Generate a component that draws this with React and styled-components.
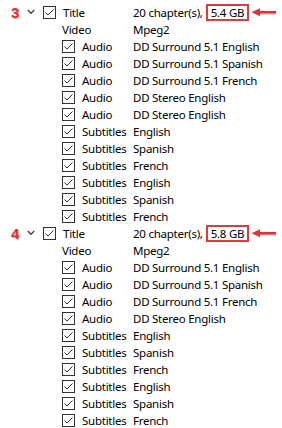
import React from "react";
import styled, { createGlobalStyle } from "styled-components";

const Global = createGlobalStyle`
  html, body { margin: 0; padding: 0; background: #fff; }
  body {
    font-family: "Noto Sans", "Open Sans", sans-serif;
    font-size: 11.5px;
    letter-spacing: -0.25px;
    color: #000;
  }
`;

const Tree = styled.div`
  padding-top: 4px;
  width: 282px;
`;

const Row = styled.div`
  display: grid;
  grid-template-columns: 133px 1fr;
  height: 17px;
  align-items: center;
  line-height: 17px;
  white-space: nowrap;
`;

const Left = styled.div`
  display: flex;
  align-items: center;
  padding-left: ${(p) => p.$indent}px;
`;

const Marker = styled.span`
  width: 27px;
  box-sizing: border-box;
  padding-left: 11px;
  color: #d8343c;
  font-family: "Liberation Sans", Arial, sans-serif;
  font-weight: bold;
  font-size: 15px;
  letter-spacing: 0;
  text-shadow: 1px 1px 1px rgba(120, 0, 0, 0.35);
`;

const Chevron = styled.svg`
  width: 8px;
  height: 6px;
  margin-right: 8px;
  margin-top: -2px;
`;

const Box = styled.svg`
  width: 13px;
  height: 13px;
  margin-right: 7px;
  flex: none;
`;

const Label = styled.span``;

const Value = styled.div`
  display: flex;
  align-items: center;
`;

const SizeBox = styled.span`
  border: 2px solid #dd3b40;
  padding: 0 3px 0 3px;
  margin-left: 3px;
  line-height: 13px;
  height: 13px;
  display: inline-block;
`;

const Arrow = styled.svg`
  width: 26px;
  height: 9px;
  margin-left: 2px;
`;

function Check() {
  return (
    <Box viewBox="0 0 13 13">
      <rect x="0.5" y="0.5" width="12" height="12" fill="#fff" stroke="#333" />
      <path d="M2.5 6.5 L5 9 L10.5 3.5" fill="none" stroke="#333" strokeWidth="1" />
    </Box>
  );
}

function Group({ num, size, audio, subs }) {
  return (
    <>
      <Row>
        <Left $indent={0}>
          <Marker>{num}</Marker>
          <Chevron viewBox="0 0 8 6">
            <path d="M0.8 1 L4 4.2 L7.2 1" fill="none" stroke="#444" strokeWidth="1.4" />
          </Chevron>
          <Check />
          <Label>Title</Label>
        </Left>
        <Value>
          20 chapter(s),
          <SizeBox>{size}</SizeBox>
          <Arrow viewBox="0 0 26 9">
            <path d="M9 5.5 H25.5 V7 H9 Z" fill="rgba(0,0,0,0.15)" />
            <path d="M7 3 H25 V5.6 H7 Z" fill="#d8343c" />
            <path d="M0.5 4.3 L9 0.3 L9 8.3 Z" fill="#d8343c" />
          </Arrow>
        </Value>
      </Row>
      <Row>
        <Left $indent={62}>
          <Label>Video</Label>
        </Left>
        <Value>Mpeg2</Value>
      </Row>
      {audio.map((a, i) => (
        <Row key={"a" + i}>
          <Left $indent={62}>
            <Check />
            <Label>Audio</Label>
          </Left>
          <Value>{a}</Value>
        </Row>
      ))}
      {subs.map((s, i) => (
        <Row key={"s" + i}>
          <Left $indent={62}>
            <Check />
            <Label>Subtitles</Label>
          </Left>
          <Value>{s}</Value>
        </Row>
      ))}
    </>
  );
}

const subs = ["English", "Spanish", "French", "English", "Spanish", "French"];

export default function App() {
  return (
    <>
      <Global />
      <Tree>
        <Group
          num="3"
          size="5.4 GB"
          audio={[
            "DD Surround 5.1 English",
            "DD Surround 5.1 Spanish",
            "DD Surround 5.1 French",
            "DD Stereo English",
            "DD Stereo English",
          ]}
          subs={subs}
        />
        <Group
          num="4"
          size="5.8 GB"
          audio={[
            "DD Surround 5.1 English",
            "DD Surround 5.1 Spanish",
            "DD Surround 5.1 French",
            "DD Stereo English",
          ]}
          subs={subs}
        />
      </Tree>
    </>
  );
}
